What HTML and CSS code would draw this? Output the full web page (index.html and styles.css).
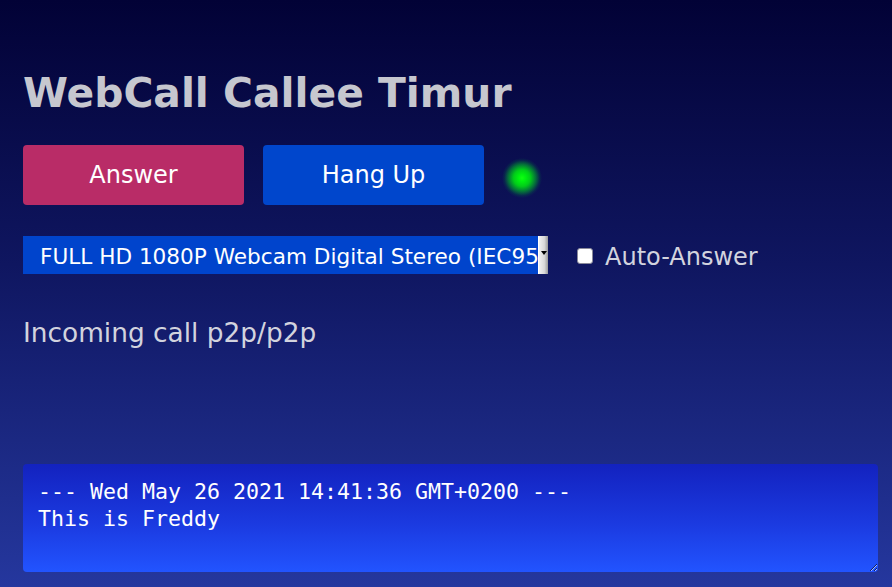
FILE: index.html
```html
<!DOCTYPE html>
<html lang="en">
<head>
<meta charset="utf-8">
<title>WebCall Callee</title>
<link rel="stylesheet" href="styles.css">
</head>
<body>
<div class="page">
  <h1 class="title">WebCall Callee Timur</h1>
  <div class="actions">
    <button class="btn btn-answer">Answer</button>
    <button class="btn btn-hangup">Hang Up</button>
    <span class="status-dot"></span>
  </div>
  <div class="options">
    <div class="device-select">
      <span class="device-label">FULL HD 1080P Webcam Digital Stereo (IEC95</span>
      <span class="device-arrow"></span>
    </div>
    <label class="auto-answer"><span class="checkbox"></span>Auto-Answer</label>
  </div>
  <div class="status-text">Incoming call p2p/p2p</div>
  <textarea class="messages" readonly>--- Wed May 26 2021 14:41:36 GMT+0200 ---
This is Freddy</textarea>
</div>
</body>
</html>
```

FILE: styles.css
```css
html, body {
  margin: 0;
  padding: 0;
  height: 100%;
}
body {
  background: linear-gradient(to bottom, #020236 0%, #0f1660 45%, #25379e 100%);
  font-family: "DejaVu Sans", sans-serif;
  overflow: hidden;
}
.page {
  display: flex;
  flex-direction: column;
  padding: 0 14px 0 23px;
  height: 587px;
  box-sizing: border-box;
}
.title {
  margin: 69px 0 0 0;
  font-size: 40.8px;
  line-height: 48px;
  font-weight: bold;
  color: #c6c7cf;
}
.actions {
  display: flex;
  align-items: center;
  gap: 19px;
  margin-top: 28px;
  height: 60px;
}
.btn {
  width: 221px;
  height: 60px;
  border: none;
  border-radius: 4px;
  color: #ffffff;
  font-family: "DejaVu Sans", sans-serif;
  font-size: 24px;
  padding: 0;
}
.btn-answer {
  background: #b92c67;
}
.btn-hangup {
  background: #0046cc;
}
.status-dot {
  width: 40px;
  height: 40px;
  margin-top: 6px;
  margin-left: -1px;
  background: radial-gradient(circle closest-side at center, #10ff10 0%, #00f010 18%, rgba(0, 220, 20, 0.92) 42%, rgba(0, 180, 40, 0.6) 68%, rgba(0, 120, 60, 0.22) 88%, rgba(13, 24, 96, 0) 100%);
}
.options {
  display: flex;
  align-items: center;
  margin-top: 31px;
  height: 38px;
}
.device-select {
  display: flex;
  width: 525px;
  height: 38px;
  background: #0044cc;
  box-sizing: border-box;
}
.device-label {
  flex: 1;
  overflow: hidden;
  white-space: nowrap;
  color: #ffffff;
  font-size: 21.6px;
  line-height: 41px;
  padding-left: 17px;
}
.device-arrow {
  position: relative;
  width: 10px;
  background: linear-gradient(to right, #f2f2f2 0%, #d8d8d8 60%, #9a9a9a 100%);
  border-left: 1px solid #ffffff;
  box-sizing: border-box;
}
.device-arrow::after {
  content: "";
  position: absolute;
  left: 2px;
  top: 15px;
  border-left: 3px solid transparent;
  border-right: 3px solid transparent;
  border-top: 4px solid #000000;
}
.auto-answer {
  display: flex;
  align-items: center;
  margin-left: 29px;
  margin-top: 3px;
  color: #d2d3de;
  font-size: 24px;
}
.checkbox {
  width: 16px;
  height: 16px;
  border-radius: 3px;
  background: #ffffff;
  border: 1px solid #8a8a9a;
  box-sizing: border-box;
  margin-right: 12px;
  margin-top: -1px;
}
.status-text {
  margin-top: 44px;
  font-size: 26.4px;
  line-height: 30px;
  color: #d2d3de;
}
.messages {
  margin-top: 116px;
  width: 855px;
  height: 108px;
  box-sizing: border-box;
  border: none;
  border-radius: 4px;
  background: linear-gradient(to bottom, #1322bf 0%, #1b3ae0 55%, #2254ff 100%);
  color: #ffffff;
  font-family: "DejaVu Sans Mono", monospace;
  font-size: 21.6px;
  line-height: 27px;
  padding: 14px 15px;
  outline: none;
  overflow: hidden;
}
```
